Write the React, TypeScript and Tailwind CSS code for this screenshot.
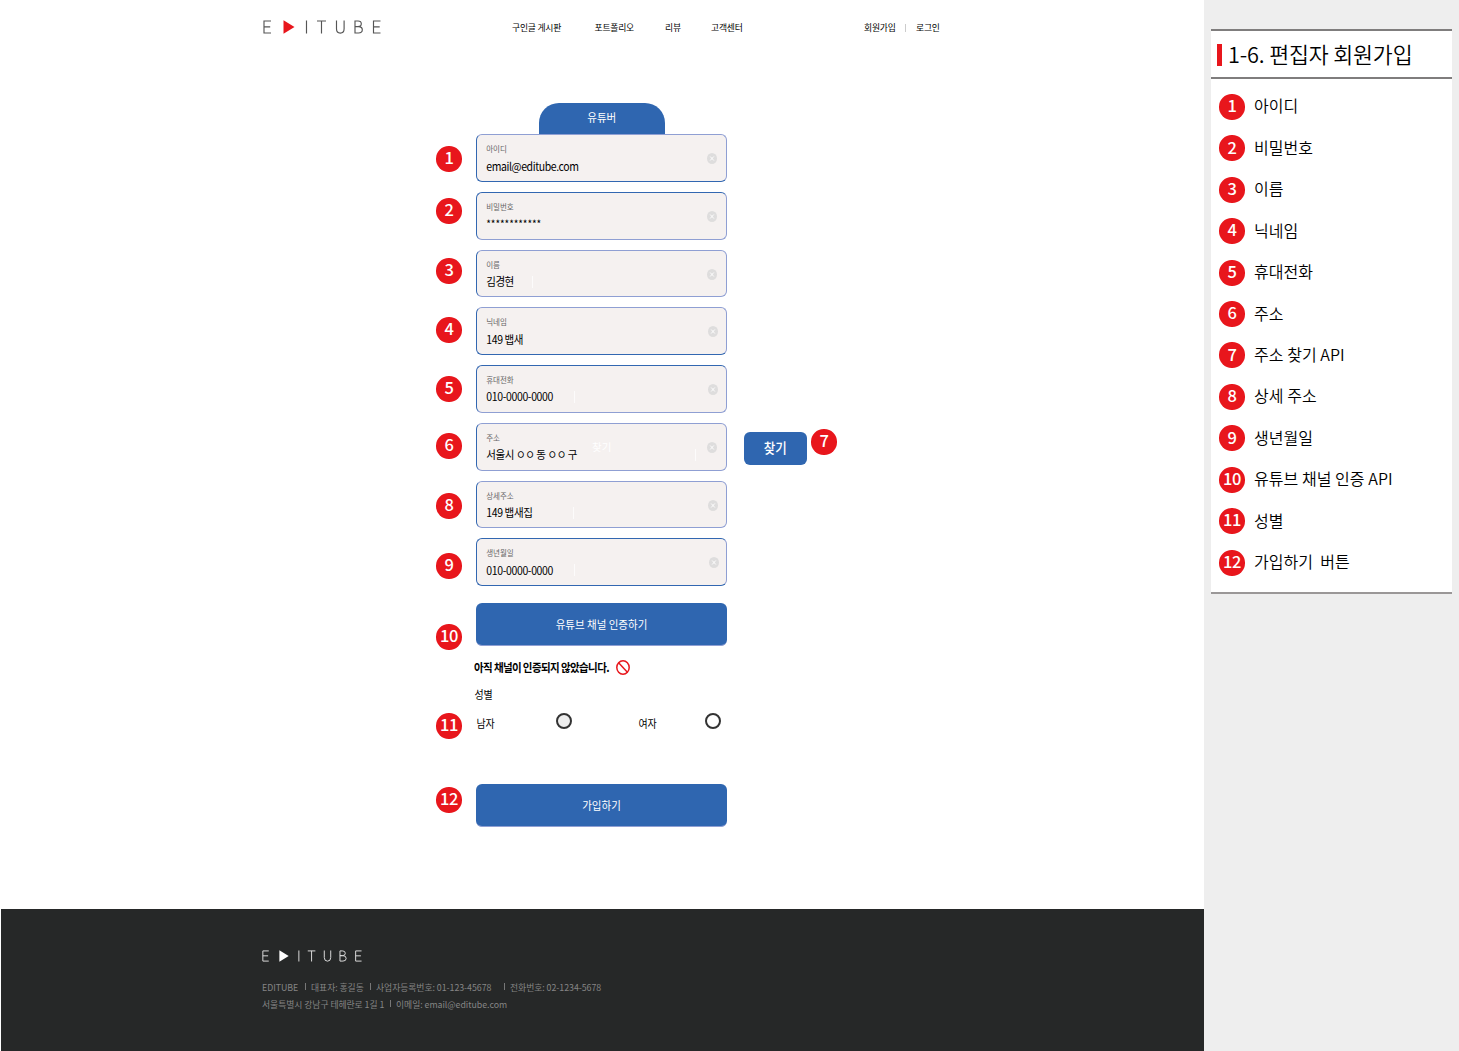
import React from 'react';

function Badge({ n, className = '' }: { n: number; className?: string }) {
  return (
    <span
      className={`flex h-[26px] w-[26px] shrink-0 items-center justify-center rounded-full bg-[#e8161c] bg-clip-content p-[0.3px] text-[16.500px] leading-none font-medium tracking-[-0.4px] text-white ${className}`}
    >
      <span className="relative -top-[1.500px]">{n}</span>
    </span>
  );
}

function Logo({ play, className = '' }: { play: string; className?: string }) {
  return (
    <svg viewBox="0 0 118 14" fill="none" className={className} aria-label="EDITUBE">
      <path
        d="M8 1H1v12h7M1 6.800h6.200M43.500 .5v13M54 1h9M58.500 1v12.500M73.500 .5v8.300q0 4.300 3.800 4.300t3.800-4.300V.5M92 1v12h3.500q3.800 0 3.800-3.200T95.500 6.600H92h3q3.300 0 3.300-2.800T95 1zM117.500 1h-7v12h7M110.500 6.800h6.200"
        stroke="currentColor"
        strokeWidth="1.150"
      />
      <path d="M20.500 .2 31.500 7l-11 6.800z" fill={play} />
    </svg>
  );
}

function ClearIcon() {
  return (
    <svg viewBox="0 0 10 10" className="h-[11px] w-[10px]" preserveAspectRatio="none">
      <circle cx="5" cy="5" r="5" fill="#dedddd" />
      <path d="m3.200 3.200 3.600 3.600m0-3.600L3.200 6.800" stroke="#fff" strokeWidth=".9" />
    </svg>
  );
}

type FieldData = {
  n: number;
  label: string;
  value: string;
  row: string;
  height: string;
  badge: string;
  icon: string;
  edge: string;
  text: string;
  caret?: string;
};

const fields: FieldData[] = [
  { n: 1, label: '아이디', value: 'email@editube.com', row: 'h-[58px]', height: 'h-[48px]', badge: 'mt-[12px]', icon: 'right-[9px]', edge: 'border-b-[#3267b1]', text: 'mt-[5px] text-[10.500px] tracking-[-0.4px]' },
  { n: 2, label: '비밀번호', value: '************', row: 'h-[58px]', height: 'h-[48px]', badge: 'mt-[6px]', icon: 'right-[9px]', edge: 'border-t-[#3267b1]', text: 'mt-[4px] text-[10px] tracking-[-0.1px]' },
  { n: 3, label: '이름', value: '김경현', row: 'h-[57px]', height: 'h-[47px]', badge: 'mt-[8px]', icon: 'right-[9px]', edge: '', text: 'mt-[4px] text-[10.500px] tracking-[-0.5px]', caret: 'left-[55px]' },
  { n: 4, label: '닉네임', value: '149 뱁새', row: 'h-[58px]', height: 'h-[48px]', badge: 'mt-[10px]', icon: 'right-[8px]', edge: 'border-b-[#3267b1]', text: 'mt-[5px] text-[10.500px] tracking-[-0.4px]' },
  { n: 5, label: '휴대전화', value: '010-0000-0000', row: 'h-[58px]', height: 'h-[48px]', badge: 'mt-[11px]', icon: 'right-[8px]', edge: 'border-t-[#3267b1]', text: 'mt-[4px] text-[10.500px] tracking-[-0.360px]', caret: 'left-[97px]' },
  { n: 6, label: '주소', value: '서울시 ㅇㅇ 동 ㅇㅇ 구', row: 'h-[58px]', height: 'h-[48px]', badge: 'mt-[10px]', icon: 'right-[9px]', edge: '', text: 'mt-[4px] text-[10.500px] tracking-[-0.430px]', caret: 'left-[218px]' },
  { n: 8, label: '상세주소', value: '149 뱁새집', row: 'h-[57px]', height: 'h-[47px]', badge: 'mt-[12px]', icon: 'right-[8px]', edge: '', text: 'mt-[4px] text-[10.500px] tracking-[-0.380px]', caret: 'left-[96px]' },
  { n: 9, label: '생년월일', value: '010-0000-0000', row: 'h-[65px]', height: 'h-[48px]', badge: 'mt-[15px]', icon: 'right-[7px]', edge: 'border-y-[#3267b1]', text: 'mt-[5px] text-[10.500px] tracking-[-0.360px]', caret: 'left-[97px]' },
];

function Field({ f }: { f: FieldData }) {
  return (
    <div className={`flex ${f.row}`}>
      <Badge n={f.n} className={f.badge} />
      <div
        className={`relative ml-[14px] w-[251px] rounded-[6px] border border-[#8f9fd3] border-l-[#3267b1] bg-[#f5f1f0] pt-[9px] pl-[9.300px] ${f.height} ${f.edge}`}
      >
        <div className="h-[10px] scale-y-110 text-[7.500px] leading-[10px] tracking-[-0.1px] text-[#666]">{f.label}</div>
        <div className={`h-[16px] scale-y-110 leading-[16px] whitespace-pre text-black ${f.text}`}>{f.value}</div>
        <span className={`absolute top-[18px] ${f.icon}`}>
          <ClearIcon />
        </span>
        {f.caret && <span className={`absolute top-[25px] h-[12px] w-px bg-white/70 ${f.caret}`} />}
        {f.n === 6 && <span className="absolute top-[15px] left-[115px] text-[10.500px] leading-[16px] text-white">찾기</span>}
      </div>
      {f.n === 6 && (
        <>
          <button className="mt-[9px] ml-[16.500px] h-[32.500px] w-[63.500px] rounded-[6px] bg-[#2f66b0] text-[12.500px] leading-[32px] font-medium text-white">
            <span className="inline-block scale-y-110">찾기</span>
          </button>
          <Badge n={7} className="mt-[6px] ml-[4px]" />
        </>
      )}
    </div>
  );
}

const legend = ['아이디', '비밀번호', '이름', '닉네임', '휴대전화', '주소', '주소 찾기 API', '상세 주소', '생년월일', '유튜브 채널 인증 API', '성별', '가입하기  버튼'];

export default function App() {
  return (
    <div className="flex h-[1051px] w-[1459px] overflow-hidden bg-white font-['Noto_Sans_CJK_KR',sans-serif] text-black">
      <div className="flex w-[1204px] shrink-0 flex-col">
        <header className="flex h-[55px] pl-[263px] text-[8.800px] leading-[14px] tracking-[-0.2px] whitespace-nowrap">
          <Logo play="#e8161c" className="mt-[20px] h-[14px] w-[118px] text-[#555]" />
          <nav className="mt-[21px] flex">
            <a className="ml-[131px] w-[82.500px]">구인글 게시판</a>
            <a className="w-[70.500px]">포트폴리오</a>
            <a className="w-[46px]">리뷰</a>
            <a className="w-[153px]">고객센터</a>
            <a className="w-[41px]">회원가입</a>
            <span className="mt-[3px] mr-[10px] h-[8px] w-px bg-[#ccc]" />
            <a>로그인</a>
          </nav>
        </header>

        <main className="h-[854px] pt-[48px] pl-[436px]">
          <div className="ml-[103px] h-[31px] w-[125.500px] overflow-hidden rounded-t-[20px] bg-[#2f66b0] text-center text-[10.500px] leading-[30px] text-white">
            <span className="inline-block scale-y-110">유튜버</span>
          </div>
          {fields.map((f) => (
            <Field key={f.n} f={f} />
          ))}
          <div className="flex h-[56px]">
            <Badge n={10} className="mt-[21px]" />
            <button className="ml-[14px] h-[43px] w-[251px] rounded-[6px] border-b border-[#8f9fd3] bg-[#2f66b0] text-[10.500px] leading-[43px] text-white">
              <span className="inline-block scale-y-110">유튜브 채널 인증하기</span>
            </button>
          </div>
          <div className="flex h-[17px] items-center pl-[38px] text-[10.500px] leading-[18px] font-bold tracking-[-0.6px] whitespace-nowrap">
            <span className="w-[142px] scale-y-110">아직 채널이 인증되지 않았습니다.</span>
            <svg viewBox="0 0 14 15" className="h-[15px] w-[14px]" fill="none" stroke="#e8161c" strokeWidth="1.500">
              <ellipse cx="7" cy="7.500" rx="6.200" ry="6.700" />
              <path d="m2.600 2.800 8.800 9.400" />
            </svg>
          </div>
          <div className="mt-[11px] h-[16px] scale-y-110 pl-[38.500px] text-[10px] leading-[16px] tracking-[-0.3px]">성별</div>
          <div className="flex h-[81px] text-[10px] leading-[16px] tracking-[-0.2px]">
            <Badge n={11} className="mt-[10px]" />
            <span className="mt-[12.500px] ml-[14.500px] h-[16px] w-[79.500px] scale-y-110">남자</span>
            <span className="mt-[10px] h-[16px] w-[16px] rounded-full border-2 border-[#333] bg-[#eee]" />
            <span className="mt-[12.500px] ml-[66.500px] h-[16px] w-[66px] scale-y-110">여자</span>
            <span className="mt-[10px] h-[16px] w-[16px] rounded-full border-2 border-[#333]" />
          </div>
          <div className="flex">
            <Badge n={12} className="mt-[3px]" />
            <button className="ml-[14px] h-[43px] w-[251px] rounded-[6px] border-b border-[#8f9fd3] bg-[#2f66b0] text-[10.500px] leading-[43px] text-white">
              <span className="inline-block scale-y-110">가입하기</span>
            </button>
          </div>
        </main>

        <footer className="ml-px h-[142px] bg-[#262828] pt-[41px] pl-[261px] text-[8.800px] leading-[17px] tracking-[-0.03px] whitespace-nowrap text-[#858585]">
          <Logo play="#fff" className="h-[12px] w-[100px] text-[#ddd]" />
          <div className="mt-[17px] flex">
            <span className="w-[43px]">EDITUBE</span>
            <span className="mt-[4px] mr-[5px] h-[7px] w-px bg-[#777]" />
            <span className="w-[59px]">대표자: 홍길동</span>
            <span className="mt-[4px] mr-[5px] h-[7px] w-px bg-[#777]" />
            <span className="w-[128px]">사업자등록번호: 01-123-45678</span>
            <span className="mt-[4px] mr-[5px] h-[7px] w-px bg-[#777]" />
            <span>전화번호: 02-1234-5678</span>
          </div>
          <div className="flex">
            <span className="w-[128px]">서울특별시 강남구 테헤란로 1길 1</span>
            <span className="mt-[4px] mr-[5px] h-[7px] w-px bg-[#777]" />
            <span>이메일: email@editube.com</span>
          </div>
        </footer>
      </div>

      <aside className="w-[255px] bg-[#eee] pt-[29px] pl-[7px]">
        <section className="h-[564.500px] w-[240.500px] border-b-2 border-[#9a9797] bg-white">
          <h1 className="flex h-[49.500px] items-center border-y-2 border-[#7f7d7d] pl-[6px] text-[21.700px] font-[350] tracking-[-0.150px] whitespace-nowrap">
            <span className="mt-[2px] mr-[6.500px] h-[22px] w-[4.500px] bg-[#e8161c]" />
            <span className="relative top-px">1-6. 편집자 회원가입</span>
          </h1>
          <ol className="pt-[7.600px] pl-[8px]">
            {legend.map((text, i) => (
              <li key={text} className="flex h-[41.450px] items-center">
                <Badge n={i + 1} />
                <span className="relative -top-[1.500px] ml-[9px] text-[16px] leading-[24px] font-[350] tracking-[0.050px] whitespace-pre">{text}</span>
              </li>
            ))}
          </ol>
        </section>
      </aside>
    </div>
  );
}
